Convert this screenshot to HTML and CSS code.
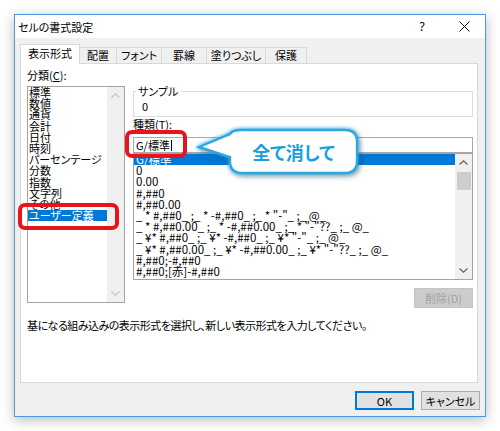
FILE: index.html
```html
<!DOCTYPE html>
<html lang="ja">
<head>
<meta charset="utf-8">
<title>セルの書式設定</title>
<link rel="stylesheet" href="styles.css">
</head>
<body>
<div class="window">
  <div class="titlebar">
    <span class="title">セルの書式設定</span>
    <span class="help">?</span>
    <span class="close"><svg width="11" height="11" viewBox="0 0 11 11"><path d="M0.5 0.5 L10.5 10.5 M10.5 0.5 L0.5 10.5" stroke="#111" stroke-width="1" fill="none"/></svg></span>
  </div>
  <div class="tabs">
    <div class="tab active t1">表示形式</div>
    <div class="tab t2">配置</div>
    <div class="tab t3">フォント</div>
    <div class="tab t4">罫線</div>
    <div class="tab t5">塗りつぶし</div>
    <div class="tab t6">保護</div>
  </div>
  <div class="panel">
    <div class="panel-grid">
      <div class="col-left">
        <div class="label">分類(<u>C</u>):</div>
        <div class="listbox">
          <div class="items">
            <div class="item">標準</div>
            <div class="item">数値</div>
            <div class="item">通貨</div>
            <div class="item">会計</div>
            <div class="item">日付</div>
            <div class="item">時刻</div>
            <div class="item">パーセンテージ</div>
            <div class="item">分数</div>
            <div class="item">指数</div>
            <div class="item">文字列</div>
            <div class="item">その他</div>
            <div class="item sel">ユーザー定義</div>
          </div>
          <div class="vscroll">
            <div class="arrow"><svg width="9" height="5" viewBox="0 0 9 5"><polyline points="0.5,4.5 4.5,0.8 8.5,4.5" fill="none" stroke="#c4c4c4" stroke-width="1.2"/></svg></div>
            <div class="track"></div>
            <div class="arrow"><svg width="9" height="5" viewBox="0 0 9 5"><polyline points="0.5,0.5 4.5,4.2 8.5,0.5" fill="none" stroke="#c4c4c4" stroke-width="1.2"/></svg></div>
          </div>
        </div>
      </div>
      <div class="col-right">
        <div class="group">
          <span class="legend">サンプル</span>
          <div class="sample">0</div>
        </div>
        <div class="label">種類(<u>T</u>):</div>
        <div class="input">G/標準<span class="caret"></span></div>
        <div class="fmtlist">
          <div class="items">
            <div class="fmt sel">G/標準</div>
            <div class="fmt">0</div>
            <div class="fmt">0.00</div>
            <div class="fmt">#,##0</div>
            <div class="fmt">#,##0.00</div>
            <div class="fmt">_ * #,##0_ ;_ * -#,##0_ ;_ * "-"_ ;_ @_ </div>
            <div class="fmt">_ * #,##0.00_ ;_ * -#,##0.00_ ;_ * "-"??_ ;_ @_ </div>
            <div class="fmt">_ ¥* #,##0_ ;_ ¥* -#,##0_ ;_ ¥* "-"_ ;_ @_ </div>
            <div class="fmt">_ ¥* #,##0.00_ ;_ ¥* -#,##0.00_ ;_ ¥* "-"??_ ;_ @_ </div>
            <div class="fmt">#,##0;-#,##0</div>
            <div class="fmt">#,##0;[赤]-#,##0</div>
          </div>
          <div class="vscroll">
            <div class="arrow"><svg width="9" height="5" viewBox="0 0 9 5"><polyline points="0.5,4.5 4.5,0.8 8.5,4.5" fill="none" stroke="#606060" stroke-width="1.2"/></svg></div>
            <div class="thumb"></div>
            <div class="track"></div>
            <div class="arrow"><svg width="9" height="5" viewBox="0 0 9 5"><polyline points="0.5,0.5 4.5,4.2 8.5,0.5" fill="none" stroke="#606060" stroke-width="1.2"/></svg></div>
          </div>
        </div>
        <div class="btnrow"><button class="btn disabled">削除(D)</button></div>
      </div>
    </div>
    <div class="desc">基になる組み込みの表示形式を選択し、新しい表示形式を入力してください。</div>
  </div>
  <div class="footer">
    <button class="btn default">OK</button>
    <button class="btn">キャンセル</button>
  </div>
</div>

<div class="mark mark-cat"></div>
<div class="mark mark-input"></div>
<div class="callout">
  <svg class="callout-shape" width="180" height="60" viewBox="0 0 180 60"><path d="M52 6 H155 Q167 6 167 18 V37 Q167 49 155 49 H52 Q40 49 40 37 V33 L9 23 L40 10 Q42 6 52 6 Z" fill="#fff" stroke="#2aa8e0" stroke-width="2.4"/></svg>
  <span class="callout-text">全て消して</span>
</div>
</body>
</html>
```

FILE: styles.css
```css
* { box-sizing: border-box; }
html, body { margin: 0; padding: 0; }
body {
  width: 500px;
  height: 431px;
  background: #fff;
  font-family: "Noto Sans CJK JP", "Noto Sans", sans-serif;
  font-size: 11px;
  font-feature-settings: "palt";
  color: #000;
  position: relative;
  overflow: hidden;
}

.window {
  margin: 14px 0 0 14px;
  width: 472px;
  height: 403px;
  border: 1px solid #4a98e3;
  background: #f0f0f0;
  box-shadow: 0 3px 12px rgba(0, 0, 0, 0.28);
  display: flex;
  flex-direction: column;
}

.titlebar {
  height: 23px;
  flex: none;
  background: #fff;
  display: flex;
  align-items: center;
}
.title { flex: 1; padding-left: 3px; line-height: 14px; }
.help {
  width: 42px;
  text-align: center;
  font-family: "Noto Sans", sans-serif;
  font-size: 12px;
  line-height: 14px;
}
.close { width: 42px; display: flex; justify-content: center; }

.tabs {
  height: 26px;
  flex: none;
  margin-bottom: -1px;
  padding-left: 5px;
  display: flex;
  align-items: flex-end;
  position: relative;
  z-index: 1;
}
.tab {
  height: 17px;
  border: 1px solid #d9d9d9;
  border-left: none;
  background: #f0f0f0;
  text-align: center;
  line-height: 14px;
  white-space: nowrap;
}
.tab.active {
  height: 20px;
  border-left: 1px solid #d9d9d9;
  border-bottom: none;
  background: #fff;
  line-height: 17px;
}
.t1 { width: 60px; }
.t2 { width: 37px; }
.t3 { width: 45px; }
.t4 { width: 45px; }
.t5 { width: 59px; }
.t6 { width: 41px; }

.panel {
  flex: none;
  margin-left: 5px;
  width: 458px;
  height: 320px;
  border: 1px solid #d9d9d9;
  background: #fff;
  padding: 4px 3px 0 6px;
}
.panel-grid {
  display: grid;
  grid-template-columns: 98px 340px;
  column-gap: 8px;
}
.label { line-height: 14px; white-space: nowrap; }

.listbox {
  margin-top: 4px;
  height: 217px;
  border: 1px solid #a3a3a3;
  display: flex;
}
.items { flex: 1; min-width: 0; }
.item {
  height: 11.2px;
  line-height: 11.2px;
  padding-left: 1px;
  white-space: nowrap;
}
.item.sel { background: #0078d7; color: #fff; }

.vscroll {
  width: 17px;
  flex: none;
  background: #f0f0f0;
  display: flex;
  flex-direction: column;
}
.arrow {
  height: 17px;
  flex: none;
  display: flex;
  align-items: center;
  justify-content: center;
}
.track { flex: 1; }
.thumb {
  height: 18px;
  flex: none;
  margin: 1px 1px 0 2px;
  background: #cdcdcd;
}

.col-right { padding-top: 23px; }
.group {
  height: 26px;
  border: 1px solid #dcdcdc;
}
.legend {
  display: block;
  width: max-content;
  margin: -8px 0 0 2px;
  padding: 0 2px;
  background: #fff;
  line-height: 14px;
}
.sample { margin-top: 2px; padding-left: 8px; line-height: 12px; }

.input {
  margin-top: 6px;
  height: 16px;
  border: 1px solid #a9a9a9;
  padding-left: 2px;
  line-height: 14px;
  display: flex;
  align-items: center;
  white-space: nowrap;
}
.caret {
  width: 1px;
  height: 11px;
  margin-left: 1px;
  background: #000;
}

.fmtlist {
  height: 127px;
  border: 1px solid #a3a3a3;
  display: flex;
}
.fmt {
  height: 11.2px;
  line-height: 11.2px;
  padding-left: 2px;
  white-space: pre;
  font-size: 11.5px;
}
.fmt.sel { background: #0078d7; color: #fff; }

.btnrow { margin-top: 8px; display: flex; justify-content: flex-end; }

.btn {
  font: inherit;
  width: 59px;
  height: 20px;
  padding: 0;
  border: 1px solid #adadad;
  background: #e1e1e1;
  color: #000;
  line-height: 16px;
  white-space: nowrap;
}
.btn.default { border: 2px solid #0078d7; }
.btn.disabled { background: #cccccc; border-color: #c4c4c4; color: #a0a0a0; }

.desc { margin-top: 10px; line-height: 14px; white-space: nowrap; letter-spacing: -0.5px; }

.footer {
  flex: 1;
  display: flex;
  justify-content: flex-end;
  align-items: flex-start;
  gap: 7px;
  padding: 8px 5px 0 0;
}
.footer .btn { height: 19px; }

.mark {
  position: absolute;
  border: 4px solid #e8141c;
  border-radius: 7px;
  z-index: 5;
}
.mark-cat { left: 18px; top: 203px; width: 101px; height: 27px; }
.mark-input { left: 125px; top: 130px; width: 62px; height: 28px; }

.callout {
  position: absolute;
  left: 190px;
  top: 124px;
  width: 180px;
  height: 60px;
  z-index: 6;
  display: grid;
}
.callout-shape {
  grid-area: 1 / 1;
  filter: drop-shadow(0 0 2px #30b0ea) drop-shadow(2px 2px 2px rgba(0, 0, 0, 0.3));
}
.callout-text {
  grid-area: 1 / 1;
  position: relative;
  z-index: 1;
  margin: 6px 13px 11px 40px;
  display: flex;
  align-items: center;
  justify-content: center;
  font-size: 18px;
  font-weight: bold;
  color: #1a9fe0;
  line-height: 1;
}
```
